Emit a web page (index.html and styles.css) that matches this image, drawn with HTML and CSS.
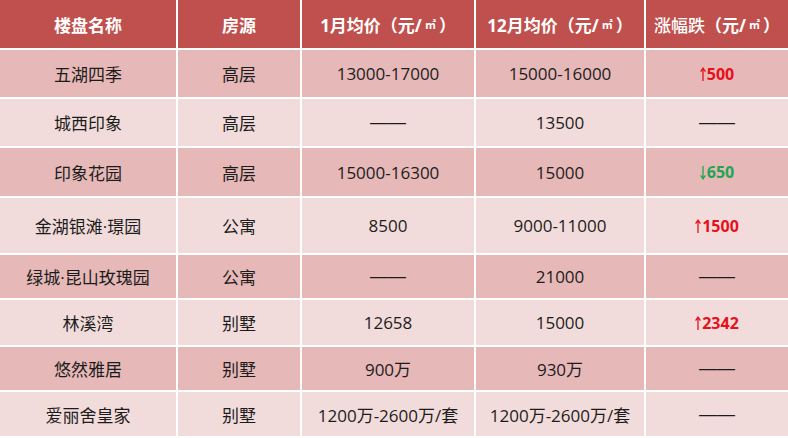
FILE: index.html
```html
<!DOCTYPE html>
<html lang="zh-CN">
<head>
<meta charset="utf-8">
<title>楼盘均价</title>
<link rel="stylesheet" href="styles.css">
</head>
<body>
<div class="sheet">
  <div class="row head">
    <div class="cell">楼盘名称</div>
    <div class="cell">房源</div>
    <div class="cell">1月均价（元/<span class="sqm">㎡</span>）</div>
    <div class="cell">12月均价（元/<span class="sqm">㎡</span>）</div>
    <div class="cell"><span class="mid">涨幅跌</span>（元/<span class="sqm">㎡</span>）</div>
  </div>
  <div class="row dark">
    <div class="cell">五湖四季</div>
    <div class="cell">高层</div>
    <div class="cell">13000-17000</div>
    <div class="cell">15000-16000</div>
    <div class="cell up"><svg class="arrow" viewBox="0 0 6 14" width="6" height="14"><path d="M3 14V1.2M0.6 4.6L3 1.2 5.4 4.6"/></svg>500</div>
  </div>
  <div class="row light">
    <div class="cell">城西印象</div>
    <div class="cell">高层</div>
    <div class="cell"><span class="dash">——</span></div>
    <div class="cell">13500</div>
    <div class="cell"><span class="dash">——</span></div>
  </div>
  <div class="row dark">
    <div class="cell">印象花园</div>
    <div class="cell">高层</div>
    <div class="cell">15000-16300</div>
    <div class="cell">15000</div>
    <div class="cell down"><svg class="arrow" viewBox="0 0 6 14" width="6" height="14"><path d="M3 0V12.8M0.6 9.4L3 12.8 5.4 9.4"/></svg>650</div>
  </div>
  <div class="row light">
    <div class="cell">金湖银滩·璟园</div>
    <div class="cell">公寓</div>
    <div class="cell">8500</div>
    <div class="cell">9000-11000</div>
    <div class="cell up"><svg class="arrow" viewBox="0 0 6 14" width="6" height="14"><path d="M3 14V1.2M0.6 4.6L3 1.2 5.4 4.6"/></svg>1500</div>
  </div>
  <div class="row dark">
    <div class="cell">绿城·昆山玫瑰园</div>
    <div class="cell">公寓</div>
    <div class="cell"><span class="dash">——</span></div>
    <div class="cell">21000</div>
    <div class="cell"><span class="dash">——</span></div>
  </div>
  <div class="row light">
    <div class="cell">林溪湾</div>
    <div class="cell">别墅</div>
    <div class="cell">12658</div>
    <div class="cell">15000</div>
    <div class="cell up"><svg class="arrow" viewBox="0 0 6 14" width="6" height="14"><path d="M3 14V1.2M0.6 4.6L3 1.2 5.4 4.6"/></svg>2342</div>
  </div>
  <div class="row dark">
    <div class="cell">悠然雅居</div>
    <div class="cell">别墅</div>
    <div class="cell">900万</div>
    <div class="cell">930万</div>
    <div class="cell"><span class="dash">——</span></div>
  </div>
  <div class="row light">
    <div class="cell">爱丽舍皇家</div>
    <div class="cell">别墅</div>
    <div class="cell">1200万-2600万/套</div>
    <div class="cell">1200万-2600万/套</div>
    <div class="cell"><span class="dash">——</span></div>
  </div>
</div>
</body>
</html>
```

FILE: styles.css
```css
html, body {
  margin: 0;
  padding: 0;
  background: #ffffff;
}

.sheet {
  width: 788px;
  height: 438px;
  box-sizing: border-box;
  padding-bottom: 2px;
  display: grid;
  grid-template-columns: 176px 122px 172px 168px 142px;
  grid-template-rows: 48px 47px 47px 48px 55px 43px 45px 43px 44px;
  gap: 2px;
  background: #ffffff;
  font-family: "Open Sans", "Noto Sans CJK SC", sans-serif;
  font-size: 17px;
  color: #1c1c1c;
}

.row {
  display: contents;
}

.cell {
  display: flex;
  align-items: center;
  justify-content: center;
  white-space: nowrap;
}

.head .cell {
  background: #c0504d;
  color: #ffffff;
  font-weight: 700;
  font-size: 17px;
}

.head .mid {
  font-weight: 500;
}

.sqm {
  font-size: 11px;
  margin: 0 3px;
}

.dark .cell {
  background: #e6b8b7;
}

.light .cell {
  background: #f2dcdb;
}

.dash {
  font-family: "Liberation Sans", sans-serif;
  font-size: 18px;
  letter-spacing: 0;
  color: #1c1c1c;
}

.up, .down {
  font-weight: 700;
  font-size: 16px;
}

.up {
  color: #e5111b;
}

.down {
  color: #22a552;
}

.arrow {
  fill: none;
  stroke: currentColor;
  stroke-width: 1.3;
  margin-right: 1px;
  margin-top: 1px;
}
```
